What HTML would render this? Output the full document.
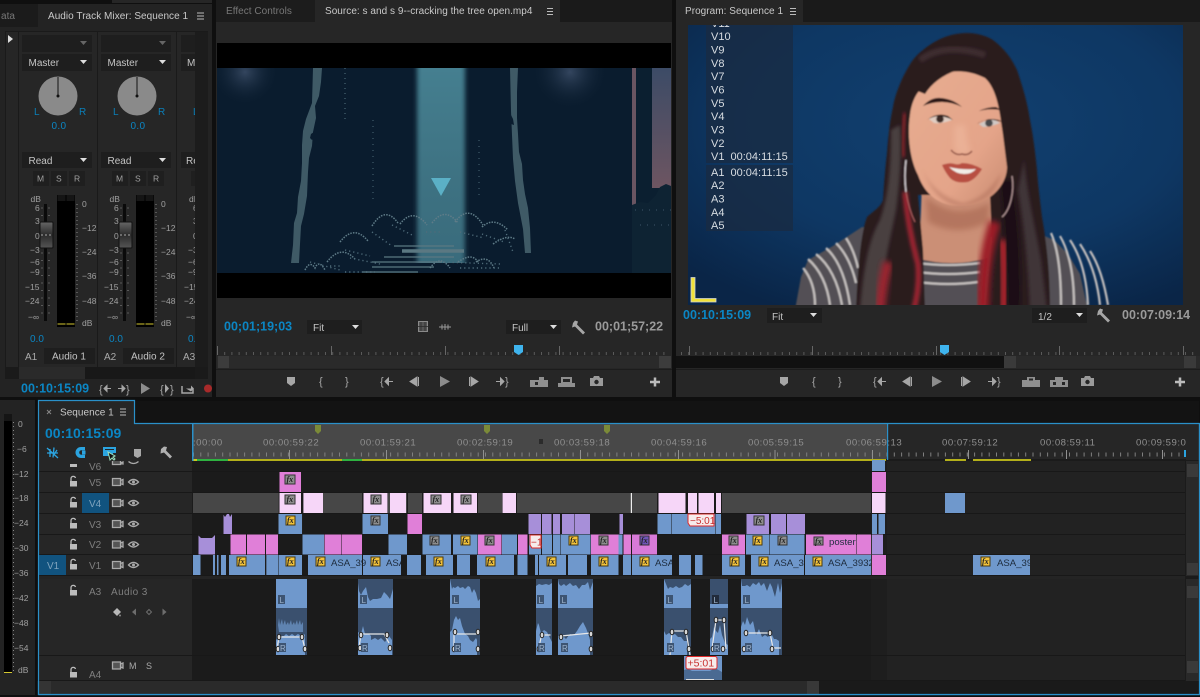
<!DOCTYPE html>
<html><head><meta charset="utf-8"><title>Premiere</title>
<style>
html,body{margin:0;padding:0;background:#0f0f0f;width:1200px;height:697px;overflow:hidden}
svg{display:block;font-family:"Liberation Sans",sans-serif}
text{fill:#a8a8a8;font-size:9px}
.t{fill:#c9c9c9;font-size:10px;letter-spacing:.04px}
.d{fill:#777;font-size:10px;letter-spacing:.03px}
.tc{fill:#0b86c4;font-weight:bold;font-size:12.5px}
.tg{fill:#9a9a9a;font-weight:bold;font-size:12.5px}
.m{fill:#c4c4c4;font-size:10px}
.s{fill:#a0a0a0;font-size:8.5px}
.r{fill:#8f8f8f;font-size:9.6px;letter-spacing:.5px}
.h{fill:#7f7f7f;font-size:10px}
.o{fill:#d8dde2;font-size:11px}
.c{fill:#1d2b3c;font-size:9.6px}
.tk{stroke:#8a8a8a;fill:none}
.fy{fill:#f3c33a;stroke:#4a3a10}
.fg{fill:#8d8d8d;stroke:#333}
.fp{fill:#6f54b8;stroke:#333}
.fx{fill:#222;font-size:8px;font-style:italic;font-weight:bold;font-family:"Liberation Serif",serif}
.e{fill:#d8d8d8;stroke:#222;stroke-width:1}
.w{fill:none;stroke:#e8e8e8;stroke-width:1.2}
.lb{fill:#c8302f;font-size:10px}
.tag{fill:#3d5472}
.tagt{fill:#9db2cb;font-size:8px}
</style></head><body>
<svg width="1200" height="697" viewBox="0 0 1200 697" xmlns="http://www.w3.org/2000/svg">
<defs>
<radialGradient id="bg" cx="55%" cy="35%" r="75%"><stop offset="0" stop-color="#114070"/><stop offset=".6" stop-color="#0e3763"/><stop offset="1" stop-color="#0a2547"/></radialGradient>
<linearGradient id="beamf" x1="0" x2="0" y1="0" y2="1"><stop offset="0" stop-color="#000" stop-opacity="0"/><stop offset="1" stop-color="#0a1c2e" stop-opacity=".2"/></linearGradient>
<linearGradient id="sky" x1="0" x2="0" y1="0" y2="1"><stop offset="0" stop-color="#3c4b66"/><stop offset="1" stop-color="#6d5561"/></linearGradient>
<radialGradient id="glow"><stop offset="0" stop-color="#34465f"/><stop offset="1" stop-color="#0b1d2f" stop-opacity="0"/></radialGradient>
<linearGradient id="face" x1="0" x2="1" y1="0" y2="1"><stop offset="0" stop-color="#e6ac90"/><stop offset=".65" stop-color="#e4a489"/><stop offset="1" stop-color="#c98b71"/></linearGradient>
<linearGradient id="fad" x1="0" x2="0" y1="0" y2="1"><stop offset="0" stop-color="#666"/><stop offset=".5" stop-color="#2c2c2c"/><stop offset="1" stop-color="#555"/></linearGradient>
<filter id="b1" x="-30%" y="-30%" width="160%" height="160%"><feGaussianBlur stdDeviation="1.500"/></filter>
<filter id="b2" x="-50%" y="-30%" width="200%" height="160%"><feGaussianBlur stdDeviation="3"/></filter>
<filter id="b05" x="-5%" y="-5%" width="110%" height="110%"><feGaussianBlur stdDeviation=".8"/></filter>
<filter id="bb" x="-30%" y="-5%" width="160%" height="110%"><feGaussianBlur stdDeviation="2.500 0"/></filter>
<clipPath id="pv"><rect x="688" y="25" width="495" height="280"/></clipPath>
<clipPath id="sv"><rect x="217" y="68" width="454" height="205"/></clipPath>
<clipPath id="ch3"><rect x="177" y="32" width="18" height="335"/></clipPath>
<clipPath id="nm"><rect x="308" y="555" width="54" height="20"/><rect x="363" y="555" width="38" height="20"/><rect x="632" y="555" width="40" height="20"/><rect x="751" y="555" width="53" height="20"/><rect x="805" y="555" width="66" height="20"/><rect x="973" y="555" width="57" height="20"/></clipPath>
</defs>

<rect width="1200" height="697" fill="#0f0f0f"/>

<!-- ===== MIXER PANEL ===== -->
<rect x="0" y="4" width="212" height="393" fill="#232323"/>
<rect x="0" y="4" width="38" height="23" fill="#1b1b1b"/>
<rect x="112" y="0" width="100" height="3" fill="#262626"/>
<text x="1" y="19" class="d">ata</text>
<text x="48" y="19" class="t">Audio Track Mixer: Sequence 1</text>
<path d="M197 13h7M197 16h7M197 19h7" stroke="#bbb" fill="none"/>
<rect x="5" y="31" width="203" height="348" fill="#1a1a1a"/>
<rect x="6" y="32" width="12" height="335" fill="#262626"/>
<path d="M8 35l5 4-5 4z" fill="#ddd"/>
<rect x="19" y="32" width="78" height="335" fill="#262626"/>
<rect x="98" y="32" width="78" height="335" fill="#262626"/>
<rect x="177" y="32" width="18" height="335" fill="#262626"/>
<rect x="195" y="32" width="13" height="335" fill="#1c1c1c"/>
<rect x="19" y="367" width="66" height="12" fill="#2a2a2a"/>
<rect x="85" y="367" width="110" height="12" fill="#181818"/>

<!-- channel 1 -->
<g>
<rect x="22" y="35" width="70" height="17" fill="#1e1e1e"/><path d="M80 41h7l-3.500 4z" fill="#666"/>
<rect x="22" y="54" width="70" height="17" fill="#1e1e1e"/><text x="28.500" y="66" class="m">Master</text><path d="M80 60h7l-3.500 4z" fill="#ddd"/>
<circle cx="58" cy="96" r="19.500" fill="#8a8a8a"/><path d="M58 77v19" stroke="#111" stroke-width="1"/><circle cx="58" cy="96" r="1.500" fill="#111"/>
<text x="34" y="115" style="fill:#0b7fb8;font-size:10px">L</text><text x="79" y="115" style="fill:#0b7fb8;font-size:10px">R</text>
<text x="51.500" y="129" style="fill:#0b86c4;font-size:10px;letter-spacing:.3px">0.0</text>
<rect x="22" y="152" width="70" height="16" fill="#1e1e1e"/><text x="28.500" y="164" class="m">Read</text><path d="M80 158h7l-3.500 4z" fill="#ddd"/>
<rect x="33" y="171" width="16" height="15" fill="#1f1f1f"/><rect x="51" y="171" width="16" height="15" fill="#1f1f1f"/><rect x="69" y="171" width="16" height="15" fill="#1f1f1f"/>
<text x="37" y="181.500" class="s">M</text><text x="56" y="181.500" class="s">S</text><text x="74" y="181.500" class="s">R</text>
<text x="30.500" y="202" class="s">dB</text>
<text x="35" y="211" class="s">6</text><text x="35" y="224" class="s">3</text><text x="35" y="239" class="s">0</text><text x="30" y="253" class="s">−3</text><text x="30" y="265" class="s">−6</text><text x="30" y="275" class="s">−9</text><text x="25" y="290" class="s">−15</text><text x="25" y="304" class="s">−24</text><text x="28" y="320" class="s">−∞</text>
<path d="M45.500 204v117" stroke="#0a0a0a" stroke-width="3"/>
<path d="M42 207.500v112M49 207.500v112" stroke="#8a8a8a" stroke-dasharray="1 6.500"/>
<rect x="40" y="222" width="13" height="26" rx="1" fill="url(#fad)" stroke="#111"/>
<path d="M41 235h11" stroke="#aaa" stroke-dasharray="2 2"/>
<rect x="57" y="195" width="18" height="132" fill="#000"/><rect x="57.500" y="195" width="8" height="6" fill="#151515"/><rect x="66.500" y="195" width="8" height="6" fill="#151515"/>
<path d="M57.500 324h8M66.500 324h8" stroke="#d4c830" stroke-width="1"/>
<path d="M77 204v118" stroke="#888" stroke-dasharray="1 3"/>
<text x="82" y="207" class="s">0</text><text x="82" y="231" class="s">−12</text><text x="82" y="255" class="s">−24</text><text x="82" y="279" class="s">−36</text><text x="82" y="304" class="s">−48</text><text x="82" y="326" class="s">dB</text>
<text x="30" y="342" style="fill:#0b86c4;font-size:10px">0.0</text>
<text x="25" y="360" style="fill:#aaa;font-size:10px">A1</text>
<rect x="44" y="348" width="51" height="16" fill="#1e1e1e"/><text x="52" y="359.500" class="m">Audio 1</text>
</g>
<!-- channel 2 -->
<g transform="translate(79 0)">
<rect x="22" y="35" width="70" height="17" fill="#1e1e1e"/><path d="M80 41h7l-3.500 4z" fill="#666"/>
<rect x="22" y="54" width="70" height="17" fill="#1e1e1e"/><text x="28.500" y="66" class="m">Master</text><path d="M80 60h7l-3.500 4z" fill="#ddd"/>
<circle cx="58" cy="96" r="19.500" fill="#8a8a8a"/><path d="M58 77v19" stroke="#111" stroke-width="1"/><circle cx="58" cy="96" r="1.500" fill="#111"/>
<text x="34" y="115" style="fill:#0b7fb8;font-size:10px">L</text><text x="79" y="115" style="fill:#0b7fb8;font-size:10px">R</text>
<text x="51.500" y="129" style="fill:#0b86c4;font-size:10px;letter-spacing:.3px">0.0</text>
<rect x="22" y="152" width="70" height="16" fill="#1e1e1e"/><text x="28.500" y="164" class="m">Read</text><path d="M80 158h7l-3.500 4z" fill="#ddd"/>
<rect x="33" y="171" width="16" height="15" fill="#1f1f1f"/><rect x="51" y="171" width="16" height="15" fill="#1f1f1f"/><rect x="69" y="171" width="16" height="15" fill="#1f1f1f"/>
<text x="37" y="181.500" class="s">M</text><text x="56" y="181.500" class="s">S</text><text x="74" y="181.500" class="s">R</text>
<text x="30.500" y="202" class="s">dB</text>
<text x="35" y="211" class="s">6</text><text x="35" y="224" class="s">3</text><text x="35" y="239" class="s">0</text><text x="30" y="253" class="s">−3</text><text x="30" y="265" class="s">−6</text><text x="30" y="275" class="s">−9</text><text x="25" y="290" class="s">−15</text><text x="25" y="304" class="s">−24</text><text x="28" y="320" class="s">−∞</text>
<path d="M45.500 204v117" stroke="#0a0a0a" stroke-width="3"/>
<path d="M42 207.500v112M49 207.500v112" stroke="#8a8a8a" stroke-dasharray="1 6.500"/>
<rect x="40" y="222" width="13" height="26" rx="1" fill="url(#fad)" stroke="#111"/>
<path d="M41 235h11" stroke="#aaa" stroke-dasharray="2 2"/>
<rect x="57" y="195" width="18" height="132" fill="#000"/><rect x="57.500" y="195" width="8" height="6" fill="#151515"/><rect x="66.500" y="195" width="8" height="6" fill="#151515"/>
<path d="M57.500 324h8M66.500 324h8" stroke="#d4c830" stroke-width="1"/>
<path d="M77 204v118" stroke="#888" stroke-dasharray="1 3"/>
<text x="82" y="207" class="s">0</text><text x="82" y="231" class="s">−12</text><text x="82" y="255" class="s">−24</text><text x="82" y="279" class="s">−36</text><text x="82" y="304" class="s">−48</text><text x="82" y="326" class="s">dB</text>
<text x="30" y="342" style="fill:#0b86c4;font-size:10px">0.0</text>
<text x="25" y="360" style="fill:#aaa;font-size:10px">A2</text>
<rect x="44" y="348" width="51" height="16" fill="#1e1e1e"/><text x="52" y="359.500" class="m">Audio 2</text>
</g>
<!-- channel 3 stub -->
<g clip-path="url(#ch3)">
<rect x="181" y="35" width="20" height="17" fill="#1e1e1e"/><rect x="181" y="54" width="20" height="17" fill="#1e1e1e"/><text x="187" y="66" class="m">M</text>
<text x="193" y="115" style="fill:#0b7fb8;font-size:10px">L</text>
<rect x="181" y="152" width="20" height="16" fill="#1e1e1e"/><text x="186" y="164" class="m">Read</text>
<rect x="191" y="171" width="10" height="15" fill="#1f1f1f"/>
<text x="189" y="202" class="s">dB</text><text x="193" y="211" class="s">6</text><text x="193" y="224" class="s">3</text><text x="193" y="239" class="s">0</text><text x="188" y="253" class="s">−3</text><text x="188" y="265" class="s">−6</text><text x="188" y="275" class="s">−9</text><text x="184" y="290" class="s">−15</text><text x="184" y="304" class="s">−24</text><text x="186" y="320" class="s">−∞</text>
<text x="188" y="342" style="fill:#0b86c4;font-size:10px">0.0</text>
<text x="183" y="360" style="fill:#aaa;font-size:10px">A3</text>
</g>
<text x="21" y="392.500" class="tc">00:10:15:09</text>
<!-- mixer transport -->
<text x="99" y="393" style="fill:#a6a6a6;font-size:11px">{</text><path d="M104 388.500h7M104 388.500l3-3v6z" stroke="#a6a6a6" fill="#a6a6a6"/>
<path d="M118 388.500h7M125 388.500l-3-3v6z" stroke="#a6a6a6" fill="#a6a6a6"/><text x="126" y="393" style="fill:#a6a6a6;font-size:11px">}</text>
<path d="M141 383l9 5.500-9 5.500z" fill="#8c8c8c"/>
<text x="160" y="393" style="fill:#a6a6a6;font-size:11px">{</text><path d="M165 384l4 4.500-4 4.500z" fill="#a6a6a6"/><text x="170" y="393" style="fill:#a6a6a6;font-size:11px">}</text>
<path d="M182 386v7h11v-4" stroke="#a6a6a6" fill="none" stroke-width="1.500"/><path d="M186 388.500h5v-3l3 3-3 3z" fill="#a6a6a6"/>
<circle cx="208" cy="388.500" r="4" fill="#a82a2a"/>

<!-- ===== SOURCE PANEL ===== -->
<rect x="216" y="0" width="456" height="397" fill="#262626"/>
<rect x="216" y="0" width="99" height="22" fill="#1c1c1c"/>
<rect x="560" y="0" width="112" height="22" fill="#1a1a1a"/>
<text x="226" y="14" class="d">Effect Controls</text>
<text x="325" y="14" class="t">Source: s and s 9--cracking the tree open.mp4</text>
<path d="M547 8.500h6M547 11.500h6M547 14.500h6" stroke="#bbb" fill="none"/>
<rect x="217" y="43" width="454" height="255" fill="#000"/>
<g clip-path="url(#sv)">
<rect x="217" y="68" width="454" height="205" fill="#0a1c2e"/>
<circle cx="245" cy="72" r="34" fill="url(#glow)"/><circle cx="570" cy="72" r="38" fill="url(#glow)"/>
<rect x="632" y="68" width="39" height="205" fill="#0b1f30"/>
<rect x="632" y="68" width="4" height="137" fill="#6a5562"/><rect x="652" y="68" width="19" height="120" fill="url(#sky)"/>
<path d="M632 205l8-3 8 1 8-8 4-8 6-3 5 2v89h-39z" fill="#0e2333"/>
<rect x="417" y="68" width="48" height="195" fill="#447f90" filter="url(#bb)"/>
<rect x="414" y="68" width="54" height="195" fill="url(#beamf)"/>
<!-- cliffs -->
<path d="M313 68h9l-1 14-2 14-4 10 1 12-3 14-1 14-3 12-1 14-1 24-3 18-3 12-1 18-1 19h-8l2-18 1-22 3-10 1-16 3-16 1-18 0-18 1-14 3-12 3-8 3-8z" fill="#3f5a66"/>
<path d="M510 68h8l-1 24v26l1 16 1 18 3 12 1 16 2 14 3 14 2 20 1 25h-6l-2-24-5-26-3-22-2-22-1-24-1-24z" fill="#3f5a66"/>
<path d="M314 132l-3 2-1 4 2 2 2-2zM510 113l3 6 1 6-3-1-2-6z" fill="#0a1c2e"/>
<!-- bushes -->
<g fill="none" stroke="#5f7c88" stroke-width="1.500" stroke-dasharray="1.500 1.200">
<path d="M372 226q13-21 26-3M400 224q13-17 27 1M432 223q13-17 26 0M455 222q14-19 28 3M482 227q12-11 26 3M340 242q14-18 28-1M327 262q14-18 28-3M305 270q5-10 10-2 4-9 10 2M430 268q10-14 20 0M458 262q14-10 20 0M476 262q12-8 18 6M493 244q14-10 22-5"/>
</g>
<g fill="none" stroke="#4f6c7a" stroke-width="1.400" stroke-dasharray="1.200 3">
<path d="M372 232l20 14M392 225l20 10M426 232l14 0M460 232l24 6M482 234l22 8M505 230l8 22M345 250l25 6M350 258l30 6M310 262l30 8M440 262l60 2M460 268l40 0M345 272h30M330 266h10"/>
</g>
<g stroke="#5b7882" fill="none"><path d="M402 251h62" stroke-width="3.500"/><path d="M394 246h60M384 257h70" stroke-width="1.200"/><path d="M372 262h70M372 267h62M363 272h55" stroke-width="1.200"/></g>
<path d="M345 68v52" stroke="#3d5866" stroke-width="1.500" stroke-dasharray="1 4"/>
<path d="M373 120v80M479 140v60" stroke="#3d5866" stroke-width="1.300" stroke-dasharray="1 5"/>
<path d="M431 178h20l-10 18z" fill="#5bb0c6"/>
<path d="M635 210h36M640 225h30" stroke="#3e5668" stroke-dasharray="1 6"/>
</g>
<text x="224" y="330.500" class="tc">00;01;19;03</text>
<rect x="307" y="320" width="55" height="14" fill="#1e1e1e"/><text x="313" y="331" class="m">Fit</text><path d="M352 325h7l-3.500 4z" fill="#ddd"/>
<rect x="506" y="320" width="55" height="14" fill="#1e1e1e"/><text x="512" y="331" class="m">Full</text><path d="M550 325h7l-3.500 4z" fill="#ddd"/>
<rect x="418.500" y="321.500" width="9" height="10" fill="#555" stroke="#8a8a8a"/><path d="M418 326.500h10M421 322v9M425 322v9" stroke="#2a2a2a" stroke-width=".8"/>
<path d="M439 327h12M442 324.500v5M445 324v6M448 324.500v5" stroke="#999"/>
<path d="M572 323l2-2.500 3 1-1 3 8 8-2 2-8-8-3 1z" fill="#a6a6a6" transform="translate(1 0)"/>
<text x="595" y="330.500" class="tg">00;01;57;22</text>
<!-- source ruler -->
<path d="M217 353.500H670" stroke="#5a5a5a" stroke-dasharray="1 6.200" stroke-width="3"/>
<path d="M217.500 346v9M331.500 346v9M445.500 346v9M559.500 346v9" stroke="#666"/>
<rect x="217" y="356" width="454" height="12" fill="#2a2a2a"/><rect x="218" y="356" width="11" height="12" fill="#3c3c3c"/><rect x="659" y="356" width="12" height="12" fill="#3c3c3c"/>
<path d="M514 345h9v7l-4.500 3-4.500-3z" fill="#3fb4ee"/>
<rect x="216" y="369" width="456" height="1" fill="#1c1c1c"/>
<!-- source transport -->
<g>
<path d="M287 377h8v6l-4 3-4-3z" fill="#a6a6a6"/>
<text x="319" y="385" style="fill:#a6a6a6;font-size:11px">{</text><text x="345" y="385" style="fill:#a6a6a6;font-size:11px">}</text>
<text x="380" y="385" style="fill:#a6a6a6;font-size:11px">{</text><path d="M385 381.500h8M385 381.500l3.500-3.500v7z" stroke="#a6a6a6" fill="#a6a6a6"/>
<path d="M410 381.500l7-4.500v9zM418.500 377v9" fill="#a6a6a6" stroke="#a6a6a6"/>
<path d="M440 376l10 5.500-10 5.500z" fill="#8c8c8c"/>
<path d="M478 381.500l-7-4.500v9zM469.500 377v9" fill="#a6a6a6" stroke="#a6a6a6"/>
<path d="M496 381.500h8M504 381.500l-3.500-3.500v7z" stroke="#a6a6a6" fill="#a6a6a6"/><text x="505" y="385" style="fill:#a6a6a6;font-size:11px">}</text>
<path d="M530 380h9v-3h5v3h4v7h-18z" fill="#8f8f8f"/><path d="M535 382h3v3h-3z" fill="#262626"/>
<path d="M561 377h11v6h3v4h-17v-4h3zM563 379v3h7v-3z" fill="#8f8f8f" fill-rule="evenodd"/>
<path d="M590 378h3l1-2h5l1 2h3v8h-13z" fill="#9a9a9a"/><circle cx="596.500" cy="382" r="2.200" fill="#262626"/>
<path d="M650 382h10M655 377.500v9" stroke="#bbb" stroke-width="2.500"/>
</g>

<!-- ===== PROGRAM PANEL ===== -->
<rect x="676" y="0" width="524" height="397" fill="#262626"/>
<rect x="803" y="0" width="397" height="22" fill="#1a1a1a"/>
<text x="685" y="14" class="t">Program: Sequence 1</text>
<path d="M790 8.500h6M790 11.500h6M790 14.500h6" stroke="#bbb" fill="none"/>
<g clip-path="url(#pv)">
<rect x="688" y="25" width="495" height="280" fill="url(#bg)"/>
<g filter="url(#b05)">
<!-- shirt -->
<path d="M795 310l6-33 7-17 25-14 29-19 60 10 78-15 30 8 24 10 14 14 12 20 8 36z" fill="#525054"/>
<!-- stripes -->
<g fill="none" stroke="#c4bfbe" stroke-width="2.200">
<path d="M803 268q12 14 12 37M808 259q18 16 22 46M816 254q20 16 26 51M826 248q18 16 24 57M836 243q14 14 20 40M846 238q8 12 12 30"/>
<path d="M1051 233q10 22 10 72M1060 236q14 24 14 69M1070 240q16 24 18 65M1080 244q16 24 20 61M1090 251q12 18 18 54"/>
<path d="M918 263q30 4 62 0M918 272q30 4 62 0M918 282q30 4 60 0"/>
</g>
<!-- neck -->
<path d="M922 180l-2 62-4 16q36 10 72 0l4-18-2-60z" fill="#cb8f76"/>
<path d="M925 196q30 26 65 6l-2 20q-30 16-60 0z" fill="#a5654f" opacity=".6" filter="url(#b2)"/>
<!-- hair -->
<path d="M967 33C950 33 935 40 923 50C912 58 908 68 903 77C897 90 894 100 893 107C889 125 888 140 887 153C885 170 884 185 883 200C880 208 872 212 867 217C862 230 858 260 856 310H925L923 250L918 195H990L992 240L985 310H1050C1050 270 1046 240 1042 217C1040 200 1038 185 1037 170C1035 150 1033 135 1030 120C1027 100 1022 85 1017 70C1010 55 1002 47 993 40C985 35 975 33 967 33Z" fill="#2a1c1e"/>
<path d="M891 130C891 165 889 195 880 220C870 238 864 262 860 310H880C882 270 890 240 896 210C900 180 902 150 900 125Z" fill="#4a3f41" filter="url(#b1)"/>
<path d="M1024 160C1028 200 1036 230 1041 260L1047 310H1030C1028 265 1024 225 1018 190Z" fill="#413537" filter="url(#b1)"/>
<path d="M1000 180Q1006 230 1008 310H1020Q1022 240 1012 180Z" fill="#1a1113" filter="url(#b1)"/>
<path d="M920 60Q945 42 985 55" stroke="#3f2f30" stroke-width="6" fill="none" filter="url(#b1)"/>
<!-- red -->
<g fill="none">
<path d="M905 113q-3 22-2 44" stroke="#8a232b" stroke-width="3.500" filter="url(#b1)"/>
<path d="M905 192q3 36 13 72 2 22-4 45" stroke="#a02830" stroke-width="5" filter="url(#b1)"/>
<path d="M888 262q-6 22-8 48" stroke="#9c2830" stroke-width="10" filter="url(#b2)"/>
<path d="M995 222q-12 34-12 88" stroke="#9c1f27" stroke-width="12" filter="url(#b2)"/>
<path d="M1002 240q4 30 2 70" stroke="#ad262e" stroke-width="9" filter="url(#b2)"/>
</g>
<!-- face -->
<path d="M920 90C930 72 960 65 985 78C998 90 1000 115 1003 135L1007 167C1007 185 990 205 963 206C940 207 925 195 918 175C910 160 907 135 910 115C911 105 915 95 920 90Z" fill="url(#face)"/>
<path d="M922 168q10 26 41 35 22-4 38-30-6 28-36 33-28 2-43-38z" fill="#a0604e" opacity=".35" filter="url(#b1)"/>
<path d="M955 125q-2 15 0 26 8 6 16 0-4-6-6-26z" fill="#f0bca2" opacity=".5" filter="url(#b2)"/>
<path d="M951 150q5 6 11 4 6 2 10-3" fill="none" stroke="#96584a" stroke-width="1.500"/>
<path d="M915 90q18-18 42-20-22 8-32 24z" fill="#2a1c1e"/>
<!-- brows -->
<path d="M923 106q8-9 18-8 12 1 21 9-10-5-20-5-10 0-19 4z" fill="#2a1816"/>
<path d="M979 111q8-4 17-4l5 3q-12-2-22 1z" fill="#2a1816"/>
<!-- eyes -->
<path d="M929 119q8-6 18-3l5 4q-10 4-18 3z" fill="#e0cdc2"/><circle cx="940" cy="119" r="3.800" fill="#3b2b28"/>
<path d="M927 120q10-8 21-4l5 4q-6-3-13-4-7 0-13 4z" fill="#1d1110"/>
<path d="M979 124q8-5 16-4l5 3q-10 4-17 4z" fill="#d0c8c4"/><circle cx="989" cy="123" r="3.800" fill="#4a4a4c"/>
<path d="M977 124q10-7 22-4l3 2q-10-3-14-2-6 0-11 4z" fill="#1d1110"/>
<!-- mouth -->
<path d="M942 165q8-3 13-1 4 1 7-1 10 0 20 6-6 10-14 13-12 2-18-4-5-6-8-13z" fill="#b84f42"/>
<path d="M949 167q12 3 27 2-4 5-12 5-8 0-15-7z" fill="#f1ece6"/>
<!-- earrings -->
<path d="M906 160q-2 16 0 32" fill="none" stroke="#cfc8cc" stroke-width="1.500"/>
<path d="M906 192q3 18 9 30" stroke="#b06060" fill="none"/>
<path d="M1012 176q2 12-1 24-3 12-9 17" fill="none" stroke="#b89a9a" stroke-width="1.200"/>
</g>
<!-- overlay -->
<rect x="706" y="25" width="87" height="138" fill="#1a2b42" fill-opacity=".75"/>
<rect x="706" y="165" width="87" height="66" fill="#1a2b42" fill-opacity=".75"/>
<g>
<text x="711" y="27" class="o">V11</text>
<text x="711" y="40" class="o">V10</text><text x="711" y="53.500" class="o">V9</text><text x="711" y="67" class="o">V8</text><text x="711" y="80" class="o">V7</text><text x="711" y="93.500" class="o">V6</text><text x="711" y="107" class="o">V5</text><text x="711" y="120" class="o">V4</text><text x="711" y="133.500" class="o">V3</text><text x="711" y="147" class="o">V2</text>
<text x="711" y="160" class="o">V1</text><text x="730.500" y="160" class="o">00:04:11:15</text>
<text x="711" y="176" class="o">A1</text><text x="730.500" y="176" class="o">00:04:11:15</text>
<text x="711" y="189" class="o">A2</text><text x="711" y="202.500" class="o">A3</text><text x="711" y="216" class="o">A4</text><text x="711" y="229" class="o">A5</text>
</g>
<path d="M691 277.500h4v21h21v3.500h-25z" fill="#f0e13a" stroke="#cfd4dc" stroke-width=".8"/>
</g>
<text x="683" y="319" class="tc">00:10:15:09</text>
<rect x="767" y="308" width="55" height="15" fill="#1e1e1e"/><text x="772" y="320" class="m">Fit</text><path d="M810 313h7l-3.500 4z" fill="#ddd"/>
<rect x="1032" y="308" width="55" height="15" fill="#1e1e1e"/><text x="1038" y="320" class="m">1/2</text><path d="M1076 313h7l-3.500 4z" fill="#ddd"/>
<path d="M1097 311l2-2.500 3 1-1 3 8 8-2 2-8-8-3 1z" fill="#a6a6a6" transform="translate(1 0)"/>
<text x="1122" y="319" class="tg">00:07:09:14</text>
<!-- program ruler -->
<path d="M681 353.500H1198" stroke="#5a5a5a" stroke-dasharray="1 6.200" stroke-width="3"/>
<path d="M689.500 346v9M812.500 346v9M936.500 346v9M1059.500 346v9M1183.500 346v9" stroke="#666"/>
<rect x="676" y="356" width="524" height="12" fill="#2a2a2a"/><rect x="676" y="356" width="328" height="12" fill="#111"/><rect x="1004" y="356" width="12" height="12" fill="#3a3a3a"/><rect x="1184" y="356" width="12" height="12" fill="#3a3a3a"/>
<path d="M940 345h9v7l-4.500 3-4.500-3z" fill="#3fb4ee"/>
<rect x="676" y="369" width="524" height="1" fill="#1c1c1c"/>
<!-- program transport -->
<g>
<path d="M780 377h8v6l-4 3-4-3z" fill="#a6a6a6"/>
<text x="812" y="385" style="fill:#a6a6a6;font-size:11px">{</text><text x="838" y="385" style="fill:#a6a6a6;font-size:11px">}</text>
<text x="873" y="385" style="fill:#a6a6a6;font-size:11px">{</text><path d="M878 381.500h8M878 381.500l3.500-3.500v7z" stroke="#a6a6a6" fill="#a6a6a6"/>
<path d="M903 381.500l7-4.500v9zM911.500 377v9" fill="#a6a6a6" stroke="#a6a6a6"/>
<path d="M932 376l10 5.500-10 5.500z" fill="#8c8c8c"/>
<path d="M970 381.500l-7-4.500v9zM961.500 377v9" fill="#a6a6a6" stroke="#a6a6a6"/>
<path d="M988 381.500h8M996 381.500l-3.500-3.500v7z" stroke="#a6a6a6" fill="#a6a6a6"/><text x="997" y="385" style="fill:#a6a6a6;font-size:11px">}</text>
<path d="M1022 380h5v-3h8v3h5v7h-18z" fill="#8f8f8f"/><path d="M1029 378.500h4v2h-4z" fill="#262626"/>
<path d="M1050 380h5v-3h8v3h5v7h-18zM1053 382v3h3v-3zM1062 382v3h3v-3z" fill="#8f8f8f" fill-rule="evenodd"/>
<path d="M1081 378h3l1-2h5l1 2h3v8h-13z" fill="#9a9a9a"/><circle cx="1087.500" cy="382" r="2.200" fill="#262626"/>
<path d="M1175 382h10M1180 377.500v9" stroke="#bbb" stroke-width="2.500"/>
</g>

<!-- ===== LEFT METER ===== -->
<rect x="0" y="400" width="35" height="295" fill="#232323"/>
<rect x="4" y="414" width="8" height="259" fill="#000"/><rect x="4" y="414" width="8" height="7" fill="#151515"/>
<path d="M4 672.500h8" stroke="#d4c830"/>
<path d="M13.500 422v250" stroke="#888" stroke-dasharray="1 3"/>
<text x="18" y="427" class="s">0</text><text x="17" y="452" class="s">−6</text><text x="14" y="477" class="s">−12</text><text x="14" y="501" class="s">−18</text><text x="14" y="526" class="s">−24</text><text x="14" y="551" class="s">−30</text><text x="14" y="576" class="s">−36</text><text x="14" y="601" class="s">−42</text><text x="14" y="626" class="s">−48</text><text x="14" y="651" class="s">−54</text><text x="18" y="673" class="s">dB</text>

<!-- ===== TIMELINE ===== -->
<rect x="39" y="401" width="1160" height="293" fill="#1b1b1b"/>
<rect x="39" y="424" width="153" height="257" fill="#262626"/>
<rect x="39" y="401" width="95" height="23" fill="#262626"/>
<rect x="134" y="401" width="1065" height="22" fill="#0f0f0f" opacity=".6"/>
<rect x="887" y="424" width="298" height="257" fill="#222"/>
<rect x="871" y="460" width="16" height="221" fill="#1f1f1f" opacity=".7"/>
<!-- ruler -->
<rect x="193" y="424" width="694" height="35" fill="#484848"/>
<rect x="887" y="424" width="312" height="36" fill="#262626"/>
<rect x="192" y="459" width="994" height="2" fill="#1b1b1b"/>
<path d="M193 454.500H1185" stroke="#808080" stroke-width="4" stroke-dasharray="1 6.300"/>
<path d="M289.500 450v9M386.500 450v9M483.500 450v9M580.500 450v9M678.500 450v9M775 450v9M872.500 450v9M968.500 450v9M1066.500 450v9M1162.500 450v9" stroke="#909090"/>
<g>
<text x="193" y="445.500" class="r">:00:00</text><text x="263" y="445.500" class="r">00:00:59:22</text><text x="360" y="445.500" class="r">00:01:59:21</text><text x="457" y="445.500" class="r">00:02:59:19</text><text x="554" y="445.500" class="r">00:03:59:18</text><text x="651" y="445.500" class="r">00:04:59:16</text><text x="748" y="445.500" class="r">00:05:59:15</text><text x="846" y="445.500" class="r">00:06:59:13</text><text x="942" y="445.500" class="r">00:07:59:12</text><text x="1040" y="445.500" class="r">00:08:59:11</text><text x="1136" y="445.500" class="r">00:09:59:0</text>
</g>
<path d="M315 425h6v6l-3 3-3-3zM484 425h6v6l-3 3-3-3zM604 425h6v6l-3 3-3-3z" fill="#7b8a38"/>
<rect x="539" y="439" width="4" height="5" fill="#2b2b2b"/>
<path d="M193 460h693M945 460h21M973 460h58" stroke="#e8e21a" stroke-width="1.500"/>
<path d="M197 460h31M342 460h20" stroke="#12c34c" stroke-width="1.500"/>
<path d="M193 460h4" stroke="#e8e21a" stroke-width="1.500"/>
<rect x="1184" y="450" width="2" height="7" fill="#2ba4e0"/>

<!-- header rows -->
<g stroke="#181818" fill="none">
<path d="M39 471.500H1185M39 492.500H1185M39 513.500H1185M39 534.500H1185M39 554.500H1185M39 575.500H1185" />
<path d="M39 578.500H1185M39 655.500H1185M39 680.500H1185"/>
</g>
<rect x="39" y="576" width="1146" height="3" fill="#242424"/>
<rect x="82" y="493" width="27" height="20" fill="#11537f"/>
<rect x="39" y="555" width="27" height="20" fill="#11537f"/>
<text x="47" y="569" style="fill:#7fa3bd;font-size:10px">V1</text>
<text x="89" y="470" class="h">V6</text><text x="89" y="486" class="h">V5</text><text x="89" y="507" class="h" style="fill:#7fa3bd">V4</text><text x="89" y="528" class="h">V3</text><text x="89" y="548" class="h">V2</text><text x="89" y="569" class="h">V1</text><text x="89" y="595" class="h">A3</text><text x="89" y="678" class="h">A4</text>
<text x="111" y="595" class="h" style="letter-spacing:.4px">Audio 3</text>
<!-- locks -->
<g fill="none" stroke="#bcbcbc" stroke-width="1.300">
<path d="M71 481v-2.500a2.300 2.300 0 0 1 4.500-.5M71 502v-2.500a2.300 2.300 0 0 1 4.500-.5M71 523v-2.500a2.300 2.300 0 0 1 4.500-.5M71 544v-2.500a2.300 2.300 0 0 1 4.500-.5M71 564v-2.500a2.300 2.300 0 0 1 4.500-.5M71 590v-2.500a2.300 2.300 0 0 1 4.500-.5M71 672v-2.500a2.300 2.300 0 0 1 4.500-.5"/>
</g>
<g fill="#bcbcbc"><path d="M70 481h7v5.500h-7zM70 502h7v5.500h-7zM70 523h7v5.500h-7zM70 544h7v5.500h-7zM70 564h7v5.500h-7zM70 590h7v5.500h-7zM70 672h7v5.500h-7z"/><path d="M70 464h7v3h-7z"/></g>
<!-- cam + eye -->
<g fill="#555" stroke="#aaa" stroke-width="1.300">
<path d="M112.500 478.500h8v7h-8zM120.500 480.500l2.500-1v5l-2.500-1zM112.500 499.500h8v7h-8zM120.500 501.500l2.500-1v5l-2.500-1zM112.500 520.500h8v7h-8zM120.500 522.500l2.500-1v5l-2.500-1zM112.500 541h8v7h-8zM120.500 543l2.500-1v5l-2.500-1zM112.500 561.500h8v7h-8zM120.500 563.500l2.500-1v5l-2.500-1z"/>
<path d="M112.500 461v3.500h8V461M120.500 463l2.500-1v2l-2.500-.5z"/>
<path d="M112.500 662h8v7h-8zM120.500 664l2.500-1v5l-2.500-1z"/>
</g>
<g fill="none" stroke="#aaa" stroke-width="1.300">
<path d="M128.500 482q5-5 10 0-5 5-10 0zM128.500 503q5-5 10 0-5 5-10 0zM128.500 524q5-5 10 0-5 5-10 0zM128.500 544.500q5-5 10 0-5 5-10 0zM128.500 565q5-5 10 0-5 5-10 0zM128.500 461.500q5 4 10 0"/>
</g>
<g fill="#aaa"><circle cx="133.500" cy="482" r="1.500"/><circle cx="133.500" cy="503" r="1.500"/><circle cx="133.500" cy="524" r="1.500"/><circle cx="133.500" cy="544.500" r="1.500"/><circle cx="133.500" cy="565" r="1.500"/></g>
<text x="129" y="669" class="h" style="fill:#a8a8a8;font-size:9px">M</text><text x="146" y="669" class="h" style="fill:#a8a8a8;font-size:9px">S</text>
<!-- keyframe row -->
<path d="M117 608l4 4-4 4-4-4z" fill="#b8b8b8"/><circle cx="120" cy="615.500" r="1" fill="#888"/>
<path d="M136 608.500v7l-4-3.500z" fill="#6d6d6d"/><path d="M149 609.500l2.500 2.500-2.500 2.500-2.500-2.500z" fill="none" stroke="#6d6d6d"/><path d="M162.500 608.500v7l4-3.500z" fill="#6d6d6d"/>

<!-- tab -->
<path d="M38.500 695V400.500H134.500V423.500H1199.500V694.500H38.500z" fill="none" stroke="#2a90c9" stroke-width="1.200"/>
<rect x="192" y="423" width="1.500" height="38" fill="#2a90c9"/><rect x="887" y="423" width="1.200" height="37" fill="#2a90c9"/>
<path d="M47 410l4 4M51 410l-4 4" stroke="#888"/>
<text x="60" y="415.500" class="t">Sequence 1</text>
<path d="M120 409h6M120 412h6M120 415h6" stroke="#bbb" fill="none"/>
<text x="45" y="438" style="fill:#0b86c4;font-weight:bold;font-size:14px">00:10:15:09</text>
<!-- timeline tools -->
<path d="M47 448l11 10M47 453h11M50 449v8M54 447.500l-1 10M57 450l-4 6" stroke="#2ba4e0" stroke-width="1.300" fill="none"/>
<g fill="#2ba4e0" stroke="none">
<path d="M85 447h-4a5.500 5.500 0 0 0 0 11h4v-3.200h-3.500a2.300 2.300 0 0 1 0-4.600H85z"/><path d="M82 450.500h3.500v4H82z"/>
<path d="M103 447h13v6h-3v3h-10zM105 449v1h9v-1z" fill-rule="evenodd"/>
</g>
<path d="M108 452l2 8 2-2 2 2 1-1-2-2 2-1z" fill="#111" stroke="#9db"/>
<path d="M134 449h7v7l-3.500 2-3.500-2z" fill="#a8a8a8"/>
<path d="M161 449l3-2.500 3 .5-1 3.500 6 6-2 2-6-6-3.500 1z" fill="#b0b0b0"/>

<!-- ===== CLIPS ===== -->
<!-- V4 gray track -->
<path d="M193 503h86M303 503h59M388 503h19M408 503h14M478 503h24M517 503h115M633 503h24M722 503h149" stroke="#474747" stroke-width="20" fill="none"/>
<!-- V4 pale -->
<path d="M279.500 503h21.500M303.500 503h19.500M363.500 503h24M390 503h16M423.500 503h27.500M453.500 503h23.500M502.500 503h13.500M658.500 503h14M672.500 503h13M688 503h9M698.500 503h15.500M716 503h5M872 503h13.500" stroke="#f6d6f8" stroke-width="20" fill="none"/>
<path d="M631.500 493v20" stroke="#eee" stroke-width="1.400"/>
<!-- V5 / V6 -->
<path d="M279.500 482h21.500M872 482h14" stroke="#e07fd8" stroke-width="20"/>
<path d="M872 465.500h13" stroke="#7199cb" stroke-width="11"/>
<!-- V3 -->
<path d="M278.500 524h23.500M362.500 524h25.500M657.500 524h14M672 524h16M688 524h27M715.500 524h5.500M872 524h5M878.500 524h6.500" stroke="#6f98cc" stroke-width="20"/>
<path d="M407.500 524h14.500" stroke="#e07fd8" stroke-width="20"/>
<path d="M223.500 524h8.500M528.500 524h12.500M542 524h9.500M553 524h7M562 524h12.500M575 524h15M619.500 524h3.500M746.500 524h22.500M771 524h15M787 524h18" stroke="#a78fd9" stroke-width="20"/>
<!-- V2 -->
<path d="M230.500 544.500h15.500M247 544.500h18M266 544.500h12M324.500 544.500h17M342 544.500h20M478 544.500h23.500M518 544.500h9.500M591 544.500h27.500M623.500 544.500h7.500M722 544.500h23M806 544.500h50M857 544.500h14" stroke="#e07fd8" stroke-width="20"/>
<path d="M302.500 544.500h21.500M388.500 544.500h18.500M422.500 544.500h28.500M453 544.500h24.500M502 544.500h15M529 544.500h12M542 544.500h10M553 544.500h7.500M561 544.500h29.500M618.500 544.500h4M746 544.500h23.500M770 544.500h34.500" stroke="#6f98cc" stroke-width="20"/>
<path d="M198.500 544.500h16.500M872 544.500h11" stroke="#a78fd9" stroke-width="20"/>
<path d="M632 544.500h25" stroke="#d87ad8" stroke-width="20"/>
<path d="M198 535l3 3h11l3-3v-1h-17zM223 514l2 3 2-3zM229 514l1 3 2-3z" fill="#1b1b1b"/>
<!-- V1 -->
<path d="M193 565h7.500M213 565h2M217 565h1.500M221 565h5M229 565h36M266 565h12M278.500 565h23.500M308 565h54M363 565h38M407 565h14M426 565h27M457 565h13M477 565h37M517.500 565h10M535 565h3M539 565h27M568 565h19M591 565h27.500M623 565h8M632 565h40M679 565h12M695 565h7.500M722 565h23M751 565h53M805 565h66.500M973 565h57" stroke="#6f98cc" stroke-width="20"/>
<path d="M872 565h14" stroke="#e07fd8" stroke-width="20"/>
<path d="M945 503h20" stroke="#6f98cc" stroke-width="20"/>
<!-- clip separators -->
<path d="M279 493v20M362.500 493v20M302.500 514v20M266 555v20" stroke="#222" opacity=".7"/>
<!-- fx badges -->
<g stroke-width="1">
<rect x="285" y="475" width="10" height="9" class="fg"/><text x="286.500" y="482" class="fx">fx</text>
<rect x="285" y="495" width="10" height="9" class="fg"/><text x="286.500" y="502" class="fx">fx</text>
<rect x="371" y="495" width="10" height="9" class="fg"/><text x="372.500" y="502" class="fx">fx</text>
<rect x="431" y="495" width="10" height="9" class="fg"/><text x="432.500" y="502" class="fx">fx</text>
<rect x="461" y="495" width="10" height="9" class="fg"/><text x="462.500" y="502" class="fx">fx</text>
<rect x="286" y="516" width="9" height="9" class="fy"/><text x="287" y="523" class="fx">fx</text>
<rect x="371" y="516" width="9" height="9" class="fg"/><text x="372" y="523" class="fx">fx</text>
<rect x="754" y="516" width="10" height="9" class="fg"/><text x="755.500" y="523" class="fx">fx</text>
<rect x="430" y="536" width="9" height="9" class="fg"/><text x="431" y="543" class="fx">fx</text>
<rect x="461" y="536" width="9" height="9" class="fy"/><text x="462" y="543" class="fx">fx</text>
<rect x="485" y="536" width="9" height="9" class="fg"/><text x="486" y="543" class="fx">fx</text>
<rect x="569" y="536" width="9" height="9" class="fy"/><text x="570" y="543" class="fx">fx</text>
<rect x="599" y="536" width="9" height="9" class="fg"/><text x="600" y="543" class="fx">fx</text>
<rect x="640" y="536" width="9" height="9" class="fp"/><text x="641" y="543" class="fx">fx</text>
<rect x="729" y="536" width="9" height="9" class="fg"/><text x="730" y="543" class="fx">fx</text>
<rect x="753" y="536" width="9" height="9" class="fy"/><text x="754" y="543" class="fx">fx</text>
<rect x="778" y="536" width="9" height="9" class="fg"/><text x="779" y="543" class="fx">fx</text>
<rect x="814" y="537" width="9" height="8" class="fg"/><text x="815" y="544" class="fx">fx</text>
<rect x="237" y="557" width="9" height="9" class="fy"/><text x="238" y="564" class="fx">fx</text>
<rect x="286" y="557" width="9" height="9" class="fy"/><text x="287" y="564" class="fx">fx</text>
<rect x="316" y="557" width="9" height="9" class="fy"/><text x="317" y="564" class="fx">fx</text>
<rect x="371" y="557" width="9" height="9" class="fy"/><text x="372" y="564" class="fx">fx</text>
<rect x="434" y="557" width="9" height="9" class="fy"/><text x="435" y="564" class="fx">fx</text>
<rect x="486" y="557" width="9" height="9" class="fy"/><text x="487" y="564" class="fx">fx</text>
<rect x="547" y="557" width="9" height="9" class="fy"/><text x="548" y="564" class="fx">fx</text>
<rect x="599" y="557" width="9" height="9" class="fy"/><text x="600" y="564" class="fx">fx</text>
<rect x="640" y="557" width="9" height="9" class="fy"/><text x="641" y="564" class="fx">fx</text>
<rect x="730" y="557" width="9" height="9" class="fy"/><text x="731" y="564" class="fx">fx</text>
<rect x="759" y="557" width="9" height="9" class="fy"/><text x="760" y="564" class="fx">fx</text>
<rect x="813" y="557" width="9" height="9" class="fy"/><text x="814" y="564" class="fx">fx</text>
<rect x="981" y="557" width="9" height="9" class="fy"/><text x="982" y="564" class="fx">fx</text>
</g>
<!-- clip names -->
<g clip-path="url(#nm)">
<text x="331" y="566" class="c">ASA_39</text>
<text x="386" y="566" class="c">ASA</text>
<text x="655" y="566" class="c">ASA</text>
<text x="774" y="566" class="c">ASA_3</text>
<text x="828" y="566" class="c">ASA_3932</text>
<text x="997" y="566" class="c">ASA_39</text>
</g>
<text x="829" y="545" class="c">poster</text>
<path d="M856.500 535v20" stroke="#7a4f78"/>
<rect x="871" y="535" width="1" height="40" fill="#333"/>
<!-- time tooltips -->
<path d="M688 514h26v12h-24l-2-3z" fill="#f6ecec" stroke="#e02a2a"/><text x="690" y="524" class="lb">−5:01</text>
<path d="M530 535h11v13h-9l-2-3z" fill="#f6ecec" stroke="#e02a2a"/><text x="531" y="545.500" class="lb">−1</text>

<!-- ===== AUDIO CLIPS ===== -->
<g>
<g fill="#6f98cc"><rect x="276" y="579" width="31" height="29"/><rect x="358" y="579" width="35" height="29"/><rect x="450" y="579" width="30" height="29"/><rect x="536" y="579" width="16" height="29"/><rect x="558" y="579" width="35" height="29"/><rect x="664" y="579" width="27" height="29"/><rect x="710" y="579" width="18" height="29"/><rect x="741" y="579" width="41" height="29"/></g>
<g fill="#3a506e"><rect x="276" y="608" width="31" height="47"/><rect x="358" y="608" width="35" height="47"/><rect x="450" y="608" width="30" height="47"/><rect x="536" y="608" width="16" height="47"/><rect x="558" y="608" width="35" height="47"/><rect x="664" y="608" width="27" height="47"/><rect x="710" y="608" width="18" height="47"/><rect x="741" y="608" width="41" height="47"/></g>
<!-- L dark tops -->
<g fill="#3a506e">
<path d="M358 579h35v10l-3 10-3-4-3-3-3 6-4 1-4 0-3 2-2-4-2-10-3 4-2 4-2-4-1-8z"/>
<path d="M450 579h30v20l-2 2-2-8-2-4-2 4-2-6-2-1-3 3-2-2-3 1-2-2-3 2-2-1-1 2z"/>
<path d="M536 579h16v4l-3 2-3-1-4 1-3-1-3 2z"/>
<path d="M558 579h35v3l-3 8-2-8-3 3-3 0-3 4-3-4-3 1-3-3-4 3-2-2-3 2-2-2z"/>
<path d="M664 579h27v5l-3 2-3-2-3 3-3 1-3-2-3 2-3-1-2 2z"/>
<path d="M710 579h18v25h-18z"/>
<path d="M741 579h41v4l-2 10-2-10-3 14-3-10-2-4-3 8-3-8-3 3-2-4-3 3-3-2-3 4-3-2-2 1-3 0z"/>
</g>
<!-- R light bottoms -->
<g fill="#6f98cc">
<path d="M276 640l2-2 2 0 2-2 2 0 2-2 3 2 3-2 3 2 3-2 3 2 3-2 1 1V655H276z"/><path d="M278 625l1-7 1 7 2-6 1 6 2-5 1 5 2-3 1 3 2-5 1 5 2-3 1 3 2-5 1 5 2-5 1 5 2-3v10h-24z" opacity=".7"/>
<path d="M358 632l3 2 2-8 2 8 4 0 2 2v4l4-2 3 2 3-2 4 4 4-6 3 4V655H358z"/>
<path d="M450 655v-23l2-2 2-10 2-4 2 4 2-2 2 8 3 8 3 2 2 4 3 2 3-4 1 2V655z"/>
<path d="M536 655v-24l2-8 1 2 2 8 3-3 3 2 2 4 3 6v13z"/>
<path d="M558 655v-19l4-1 4 4 4-5 4 1 3-4 3-5 3-4 3 6 3 8 1 4V655z"/>
<path d="M664 655v-24l2 4 3-2 3 2 3-1 3 3 3 0 3 4 3 0V655z"/>
<path d="M710 655v-16l2-2 2-10 2 4 2 2 2-8 2 10 3 8 3 2v10z"/>
<path d="M741 655v-28l2-6 2 4 2-8 3 8 3-4 3 14 3-6 3 8 3-2 3 2 3-4 3 6 2 0 3 2 0 4V655z"/>
</g>
<!-- lines -->
<g class="w">
<path d="M279 637h23l3 12M279 637l-2 12M361 634h23l5 9M361 634l-2 14M454 634v16M454 634h25M537 650h1.500l3-15h9M561 636l30-3M561 636v3M670 655l2-24h14l4 24M716 620l-4 29M716 620h8l2 29M746 633h24l3 15h8"/>
</g>
<g class="e">
<ellipse cx="279" cy="637" rx="1.800" ry="2.800"/><ellipse cx="302" cy="637" rx="1.800" ry="2.800"/><ellipse cx="278" cy="649" rx="1.800" ry="2.800"/><ellipse cx="305" cy="649" rx="1.800" ry="2.800"/>
<ellipse cx="361" cy="635" rx="1.800" ry="2.800"/><ellipse cx="387" cy="635" rx="1.800" ry="2.800"/><ellipse cx="360" cy="648" rx="1.800" ry="2.800"/><ellipse cx="390" cy="648" rx="1.800" ry="2.800"/>
<ellipse cx="455" cy="632" rx="1.800" ry="2.800"/><ellipse cx="478" cy="632" rx="1.800" ry="2.800"/><ellipse cx="454" cy="649" rx="1.800" ry="2.800"/><ellipse cx="478" cy="649" rx="1.800" ry="2.800"/>
<ellipse cx="542" cy="635" rx="1.800" ry="2.800"/><ellipse cx="539" cy="649" rx="1.800" ry="2.800"/>
<ellipse cx="561" cy="637" rx="1.800" ry="2.800"/><ellipse cx="591" cy="634" rx="1.800" ry="2.800"/><ellipse cx="591" cy="649" rx="1.800" ry="2.800"/>
<ellipse cx="672" cy="632" rx="1.800" ry="2.800"/><ellipse cx="686" cy="632" rx="1.800" ry="2.800"/><ellipse cx="670" cy="649" rx="1.800" ry="2.800"/><ellipse cx="689" cy="649" rx="1.800" ry="2.800"/>
<ellipse cx="716" cy="620" rx="1.800" ry="2.800"/><ellipse cx="724" cy="620" rx="1.800" ry="2.800"/><ellipse cx="713" cy="649" rx="1.800" ry="2.800"/><ellipse cx="723" cy="649" rx="1.800" ry="2.800"/>
<ellipse cx="746" cy="633" rx="1.800" ry="2.800"/><ellipse cx="770" cy="633" rx="1.800" ry="2.800"/><ellipse cx="744" cy="649" rx="1.800" ry="2.800"/><ellipse cx="772" cy="649" rx="1.800" ry="2.800"/>
</g>
<!-- tags -->
<g class="tag">
<rect x="278" y="595" width="7" height="9"/><rect x="360" y="595" width="7" height="9"/><rect x="452" y="595" width="7" height="9"/><rect x="537" y="595" width="7" height="9"/><rect x="560" y="595" width="7" height="9"/><rect x="666" y="595" width="7" height="9"/><rect x="712" y="595" width="7" height="9" fill="#222b3a"/><rect x="743" y="595" width="7" height="9"/>
<rect x="279" y="643" width="7" height="9"/><rect x="361" y="643" width="7" height="9"/><rect x="454" y="643" width="7" height="9"/><rect x="538" y="643" width="7" height="9"/><rect x="561" y="643" width="7" height="9"/><rect x="667" y="643" width="7" height="9"/><rect x="713" y="643" width="7" height="9"/><rect x="745" y="643" width="7" height="9"/>
</g>
<g>
<text x="279.500" y="603" class="tagt">L</text><text x="361.500" y="603" class="tagt">L</text><text x="453.500" y="603" class="tagt">L</text><text x="538.500" y="603" class="tagt">L</text><text x="561.500" y="603" class="tagt">L</text><text x="667.500" y="603" class="tagt">L</text><text x="713.500" y="603" class="tagt">L</text><text x="744.500" y="603" class="tagt">L</text>
<text x="280" y="651" class="tagt">R</text><text x="362" y="651" class="tagt">R</text><text x="455" y="651" class="tagt">R</text><text x="539" y="651" class="tagt">R</text><text x="562" y="651" class="tagt">R</text><text x="668" y="651" class="tagt">R</text><text x="714" y="651" class="tagt">R</text><text x="746" y="651" class="tagt">R</text>
</g>
</g>
<!-- A4 clip -->
<rect x="684" y="656" width="38" height="24" fill="#6f98cc"/>
<path d="M684 680v-10l4-1 4 2h18l5-3 7 4v8z" fill="#4a6a92"/>
<rect x="686" y="656.500" width="31" height="12.500" rx="2" fill="#f6ecec" stroke="#e02a2a"/>
<text x="687.500" y="666.500" class="lb" style="font-size:10.500px">+5:01</text>
<path d="M686 679.500h28" stroke="#ddd"/>

<!-- timeline scrollbars -->
<rect x="39" y="681" width="1160" height="13" fill="#232323"/>
<rect x="39" y="681" width="12" height="13" fill="#343434"/>
<rect x="51" y="681" width="757" height="13" fill="#2a2a2a"/>
<rect x="807" y="681" width="12" height="13" fill="#383838"/>
<rect x="819" y="681" width="380" height="13" fill="#1a1a1a"/>
<rect x="1186" y="461" width="13" height="115" fill="#292929"/><rect x="1187" y="464" width="11" height="13" fill="#3a3a3a"/><rect x="1187" y="563" width="11" height="12" fill="#3a3a3a"/>
<rect x="1186" y="579" width="13" height="102" fill="#292929"/><rect x="1187" y="586" width="11" height="12" fill="#3a3a3a"/><rect x="1187" y="661" width="11" height="12" fill="#3a3a3a"/>
<path d="M38.500 681v13.500H1199.500V424" fill="none" stroke="#2a90c9" stroke-width="1.200"/>
</svg>
</body></html>
